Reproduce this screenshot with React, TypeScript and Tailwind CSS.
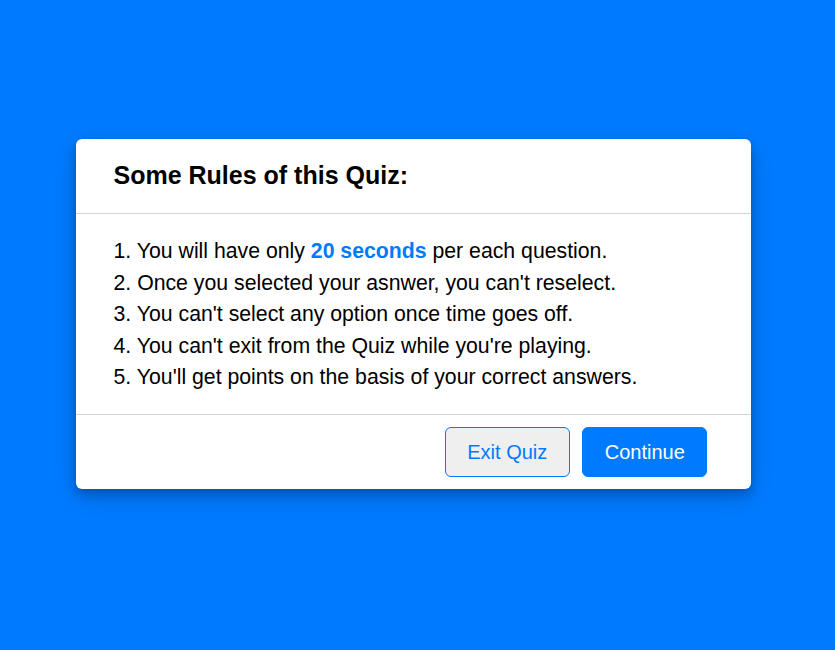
const rules = [
  null,
  "Once you selected your asnwer, you can't reselect.",
  "You can't select any option once time goes off.",
  "You can't exit from the Quiz while you're playing.",
  "You'll get points on the basis of your correct answers.",
];

function InfoBox() {
  return (
    <div className="w-[675px] rounded-[6px] bg-white shadow-[0_5px_10px_0_rgba(0,0,0,0.2),0_8px_25px_0_rgba(0,0,0,0.19)]">
      <div className="h-[75px] flex items-center px-[37.5px] border-b border-[#d3d3d3]">
        <span className="text-[25px] font-bold text-black">Some Rules of this Quiz:</span>
      </div>
      <div className="flex flex-col gap-[6.25px] px-[37.5px] pt-[25px] pb-[23.5px] text-[21.25px] leading-[25.25px] text-black">
        {rules.map((r, i) => (
          <div key={i}>
            {i + 1}.{" "}
            {r === null ? (
              <>
                You will have only <span className="font-bold text-[#007bff]">20 seconds</span> per each question.
              </>
            ) : (
              r
            )}
          </div>
        ))}
      </div>
      <div className="h-[75px] flex items-center justify-end gap-[12.5px] pr-[43.75px] border-t border-[#d3d3d3]">
        <button
          type="button"
          className="w-[125px] h-[50px] rounded-[6px] border border-[#007bff] bg-[#efefef] text-[20px] text-[#007bff]"
        >
          Exit Quiz
        </button>
        <button
          type="button"
          className="w-[125px] h-[50px] rounded-[6px] border border-[#007bff] bg-[#007bff] text-[20px] text-white"
        >
          Continue
        </button>
      </div>
    </div>
  );
}

export default function App() {
  return (
    <div className="min-h-screen bg-[#007bff] pt-[139px] pl-[76px] font-['Liberation_Sans',Arial,sans-serif]">
      <InfoBox />
    </div>
  );
}
